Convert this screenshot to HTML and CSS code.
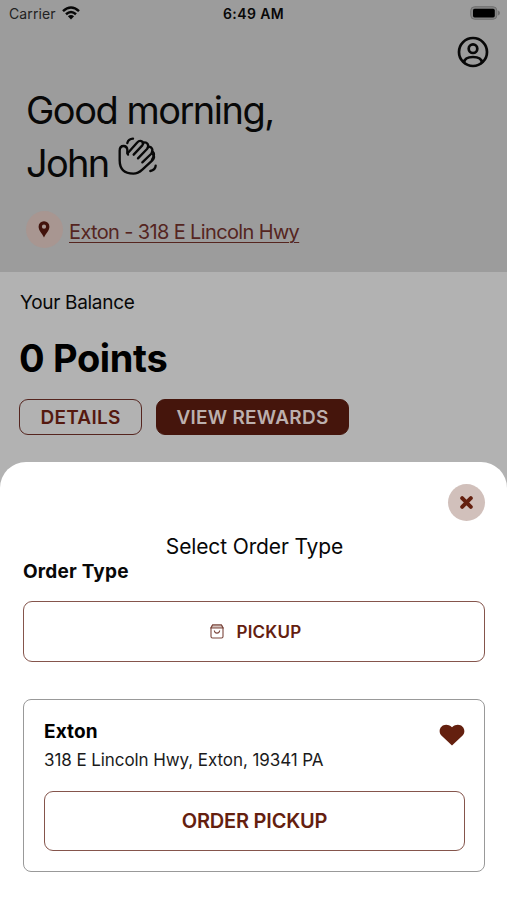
FILE: index.html
```html
<!DOCTYPE html>
<html lang="en">
<head>
<meta charset="utf-8">
<title>Select Order Type</title>
<link rel="stylesheet" href="styles.css">
</head>
<body>
<div class="screen">
  <header class="hero">
    <div class="status">
      <div class="carrier"><span>Carrier</span>
        <svg class="wifi" viewBox="0 0 18 14"><g fill="none" stroke="#080808" stroke-width="2.5"><path d="M1 5.2Q9-2.2 17 5.2"/><path d="M4 8.3Q9 3.8 14 8.3"/></g><path d="M5.9 10.2Q9 7.6 12.1 10.2L9 13.4Z" fill="#080808"/></svg>
      </div>
      <div class="clock">6:49 AM</div>
      <svg class="battery" viewBox="0 0 30 14"><rect x=".7" y=".7" width="26.2" height="12.6" rx="4" fill="#858585" stroke="#707070"/><rect x="3" y="2.8" width="21.8" height="8.6" rx="1.6" fill="#000"/><path d="M28 4.5Q30 5.4 30 7T28 9.5Z" fill="#707070"/></svg>
    </div>
    <svg class="profile" viewBox="0 0 32 32" fill="none" stroke="#080808" stroke-width="2.7"><circle cx="16" cy="16" r="14"/><circle cx="16" cy="12.7" r="4.3"/><path d="M7 26.5Q7.600 21 16 21T25 26.500"/></svg>
    <h1 class="greeting"><span class="g1">Good morning,</span><span class="g2"><span class="name">John</span>
      <svg class="wave" viewBox="24 22 120 117" fill="none" stroke="#080808" stroke-width="7" stroke-linecap="round" stroke-linejoin="round"><path d="M54 75L52 70V60Q51 49 41 49Q29 49 29 63V92Q29 132 70 132Q84 132 97 120L127 92Q136 83 129 74"/><path d="M53 71L81 39Q89 30 97 36Q102 41 97 47L71 75"/><path d="M98 40Q107 35 113 43Q117 50 111 58L84 86"/><path d="M115 51Q124 51 127 59Q129 66 123 73L97 98"/><path d="M126 65Q134 70 131 79Q130 84 126 90"/><path d="M52 40Q55 28 69 27M137 108Q136 121 121 124"/></svg>
    </span></h1>
    <div class="location"><span class="pin"><svg viewBox="0 0 12 17"><path fill="#42130c" fill-rule="evenodd" d="M6 .3A5.300 5.300 0 0 0 .6 5.700C.6 9.400 4 12.300 6 16.500C8 12.300 11.400 9.400 11.400 5.700A5.300 5.300 0 0 0 6 .3ZM6 3.600A2.100 2.100 0 1 1 6 7.800A2.100 2.100 0 0 1 6 3.600Z"/></svg></span><a class="address">Exton - 318 E Lincoln Hwy</a></div>
  </header>
  <main class="balance">
    <div><span class="label">Your Balance</span></div>
    <div><strong class="points">0 Points</strong></div>
    <div class="actions"><button class="details"><span>DETAILS</span></button><button class="rewards"><span>VIEW REWARDS</span></button></div>
  </main>
  <section class="sheet">
    <button class="close"><svg viewBox="0 0 12 12"><path d="M2 2L10 10M10 2L2 10" stroke="#64200f" stroke-width="3.600" stroke-linecap="round"/></svg></button>
    <div class="title"><span>Select Order Type</span></div>
    <div class="subtitle"><span>Order Type</span></div>
    <button class="pickup"><svg viewBox="0 0 14 15" fill="none" stroke="#7b463c" stroke-width="1.100"><path d="M2.600 1H11.400L13 3.700V12.500Q13 14 11.500 14H2.500Q1 14 1 12.500V3.700Z" /><path d="M2.600 1H11.400L13 4H1Z" fill="#d4c2bd"/><path d="M4.300 6.500Q4.500 9.100 7 9.100T9.700 6.500"/></svg><span>PICKUP</span></button>
    <article class="store">
      <div class="store-head"><div><div class="store-name"><span>Exton</span></div><div class="store-address"><span>318 E Lincoln Hwy, Exton, 19341 PA</span></div></div>
      <svg class="heart" viewBox="0 0 26 22"><path fill="#64200f" d="M13 21.500L2.400 11.500C-3 5.500 5-3.500 13 3.300C21-3.500 29 5.500 23.600 11.500Z"/></svg></div>
      <button class="order"><span>ORDER PICKUP</span></button>
    </article>
  </section>
</div>
</body>
</html>
```
FILE: styles.css
```css
* { box-sizing: border-box; }
body { margin: 0; font-family: Inter, sans-serif; color: #080808; }
button { font-family: inherit; padding: 0; background: none; display: flex; align-items: center; justify-content: center; font-weight: 600; color: #64200f; }
svg { display: block; flex: none; }
.screen { position: relative; width: 507px; height: 900px; overflow: hidden; background: #b2b2b2; }
.hero { height: 272px; background: #9c9c9c; display: flex; flex-direction: column; }
.status { height: 28px; display: grid; grid-template-columns: 1fr auto 1fr; align-items: center; padding: 0 7px 0 9px; }
.carrier { display: flex; align-items: center; gap: 6px; font-size: 14px; letter-spacing: .1px; color: #222; margin-top: -2px; }
.wifi { width: 18px; height: 14px; }
.clock { font-size: 14px; font-weight: 600; letter-spacing: .4px; margin: -2px 2px 0 0; }
.battery { width: 30px; height: 14px; justify-self: end; margin-top: -2px; }
.profile { width: 32px; height: 32px; align-self: flex-end; margin: 8px 18px 0 0; }
.greeting { margin: 16px 0 0 26px; font-size: 38px; line-height: 53px; font-weight: 400; }
.g1 { display: block; width: max-content; letter-spacing: -1.5px; }
.g2 { display: flex; width: max-content; gap: 9px; letter-spacing: -1.7px; }
.wave { width: 40px; height: 39px; }
.location { display: flex; margin: 21px 0 0 26px; height: 37px; gap: 6px; }
.pin { width: 37px; height: 37px; border-radius: 50%; background: #a89691; display: grid; place-items: center; padding-right: 1px; }
.pin svg { width: 12px; height: 17px; }
.address { font-size: 20px; line-height: 24px; margin-top: 9px; height: 24px; letter-spacing: -.64px; color: #55251f; text-decoration: underline; text-decoration-thickness: 1px; text-underline-offset: 3px; }
.balance { padding: 18px 19px 0; }
.label { display: block; width: max-content; font-size: 19px; line-height: 24px; letter-spacing: -.3px; margin-left: 1px; padding-top: 1px; }
.points { display: block; width: max-content; font-size: 38px; line-height: 46px; margin-top: 20px; font-weight: 700; letter-spacing: -.35px; color: #000; }
.actions { display: flex; gap: 14px; margin-top: 18px; }
.actions button { height: 36px; border-radius: 9px; font-size: 19px; border: 1.5px solid #55251f; letter-spacing: .25px; color: #55190f; }
.actions .details { width: 123px; }
.actions .rewards { width: 193px; background: #45150c; border-color: #45150c; color: #bcb0ae; }
.sheet { position: absolute; left: 0; right: 0; bottom: 0; height: 438px; background: #fff; border-radius: 26px 26px 0 0; padding: 22px 22px 0 23px; display: flex; flex-direction: column; }
.close { align-self: flex-end; width: 37px; height: 37px; border: 0; border-radius: 50%; background: #d1c0bb; }
.close svg { width: 13px; height: 13px; }
.title { display: flex; justify-content: center; font-size: 21px; line-height: 26px; margin-top: 13px; letter-spacing: -.13px; padding-left: 1px; }
.subtitle { font-size: 19px; line-height: 24px; font-weight: 700; letter-spacing: .2px; }
.pickup { width: 462px; height: 61px; margin-top: 17px; border: 1.5px solid #85554c; border-radius: 9px; font-size: 17px; gap: 12px; letter-spacing: .25px; padding-left: 4px; }
.pickup svg { width: 14px; height: 15px; }
.store { width: 462px; height: 173px; margin-top: 37px; border: 1.5px solid #999; border-radius: 8px; padding: 20px 19px 0 20px; }
.store-head { display: flex; justify-content: space-between; }
.store-name { font-size: 19px; line-height: 24px; font-weight: 700; letter-spacing: .1px; color: #000; }
.store-address { font-size: 17px; line-height: 24px; margin-top: 4px; letter-spacing: -.08px; color: #1b1b1b; }
.heart { width: 26px; height: 22px; margin-top: 4px; }
.order { width: 421px; height: 60px; margin-top: 19px; border: 1.5px solid #85554c; border-radius: 9px; font-size: 20px; letter-spacing: -.2px; }
```
